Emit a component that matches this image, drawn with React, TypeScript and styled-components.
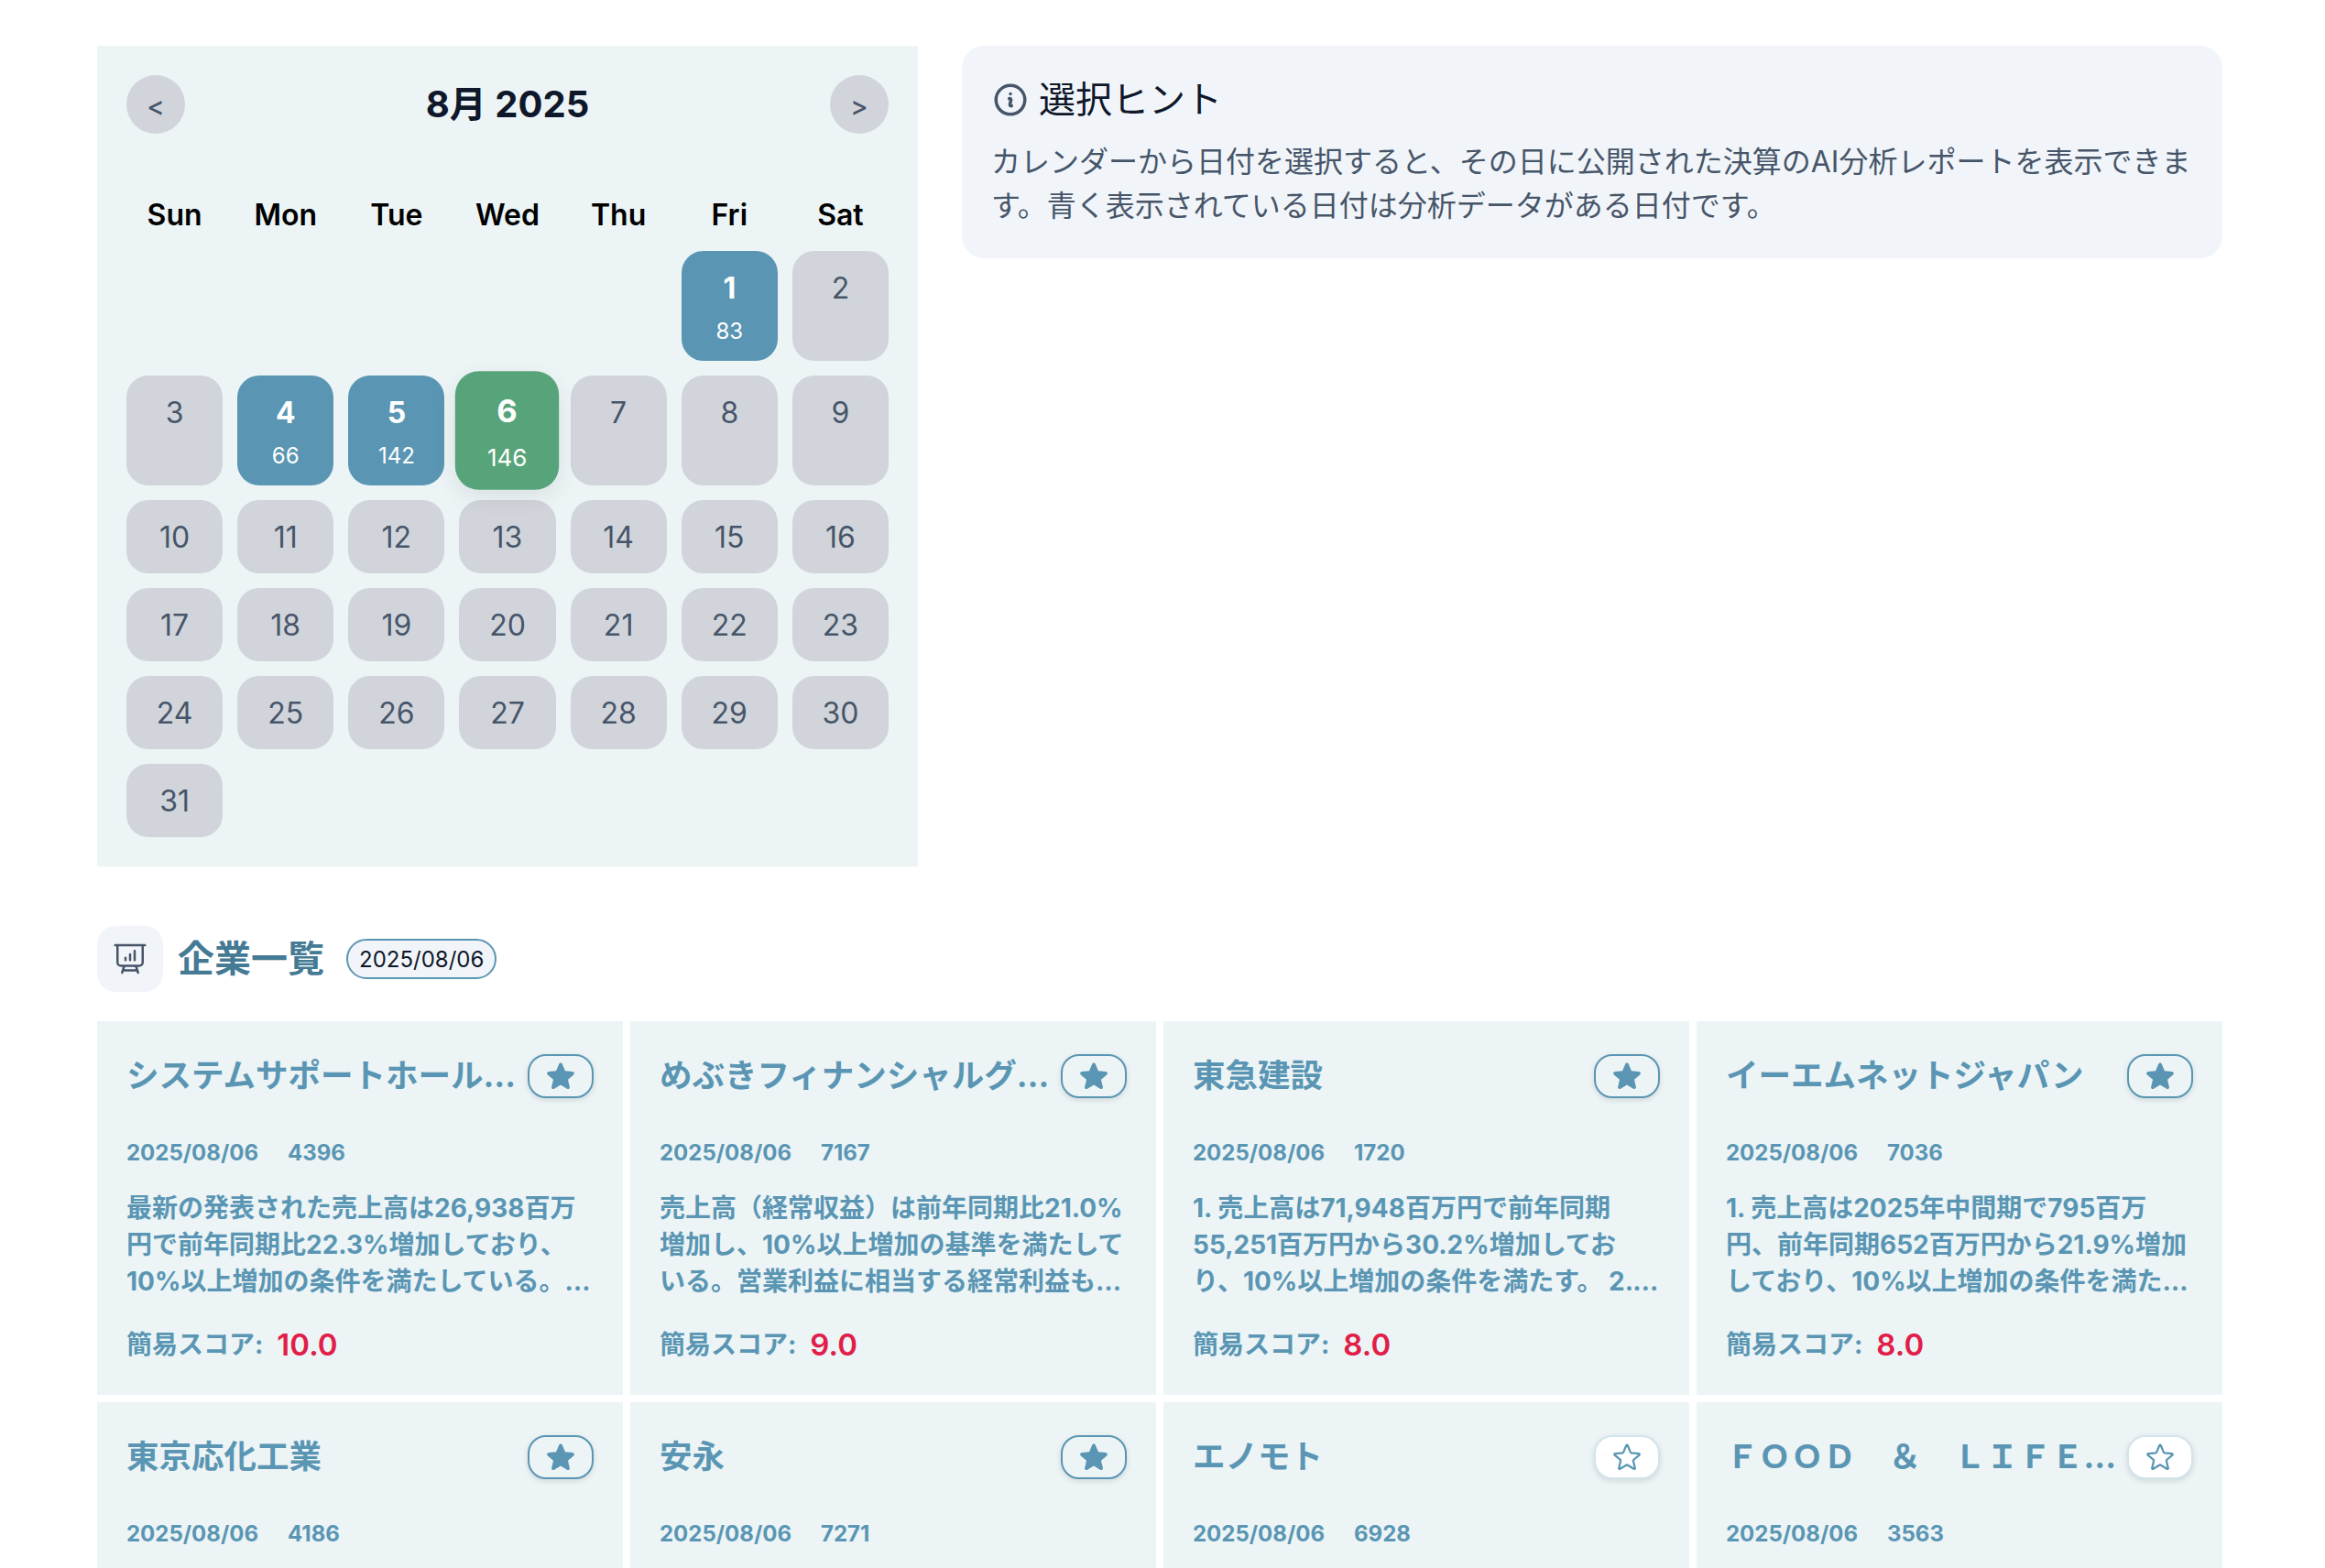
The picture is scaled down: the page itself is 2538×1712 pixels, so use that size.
import React from "react";
import styled, { createGlobalStyle } from "styled-components";
import { HiOutlineInformationCircle, HiOutlinePresentationChartBar, HiStar, HiOutlineStar } from "react-icons/hi2";

const Global = createGlobalStyle`
  html, body { margin: 0; padding: 0; background: #fff; }
  body { font-family: Inter, "Noto Sans CJK JP", sans-serif; height: 1712px; overflow: hidden; }
  * { box-sizing: border-box; }
`;

const BLUE = "#5a96b3";
const PANEL = "#ecf4f6";

const Page = styled.div`
  padding: 50px 112px 0 106px;
  height: 1712px;
  overflow: hidden;
`;
const TopRow = styled.div`
  display: grid;
  grid-template-columns: 896px minmax(0, 1fr);
  gap: 48px;
  align-items: start;
`;
const CalendarPanel = styled.section`
  background: ${PANEL};
  padding: 32px;
`;
const CalHeader = styled.div`
  display: flex;
  align-items: center;
  justify-content: space-between;
  height: 64px;
`;
const NavButton = styled.button`
  width: 64px;
  height: 64px;
  border: 0;
  border-radius: 50%;
  background: #d1d5db;
  color: #475569;
  font: 500 29px Inter, sans-serif;
  padding: 3px 0 0;
`;
const MonthTitle = styled.h2`
  margin: 0 0 6px;
  font-size: 40px;
  font-weight: 700;
  color: #0f172a;
`;
const WeekRow = styled.div`
  display: grid;
  grid-template-columns: repeat(7, minmax(0, 1fr));
  gap: 16px;
  margin-top: 69px;
  margin-bottom: 19px;
`;
const WeekDay = styled.div`
  text-align: center;
  font-size: 32px;
  line-height: 40px;
  font-weight: 600;
  color: #000;
`;
const DayGrid = styled.div`
  display: grid;
  grid-template-columns: repeat(7, minmax(0, 1fr));
  gap: 16px;
`;
const DayCell = styled.div<{ $kind: "none" | "data" | "selected" }>`
  border-radius: 24px;
  padding: 17px 0 15px;
  text-align: center;
  background: ${(p) => (p.$kind === "none" ? "#d1d5db" : p.$kind === "data" ? BLUE : "#58a47a")};
  color: ${(p) => (p.$kind === "none" ? "#475569" : "#fff")};
  ${(p) => p.$kind === "selected" && "transform: scale(1.08); box-shadow: 0 8px 24px rgba(0,0,0,0.08);"}
`;
const DayNumber = styled.div<{ $bold: boolean }>`
  font-size: 32px;
  line-height: 48px;
  font-weight: ${(p) => (p.$bold ? 700 : 400)};
`;
const DayCount = styled.div`
  margin-top: 5px;
  font-size: 24px;
  line-height: 35px;
`;
const HintPanel = styled.aside`
  background: #f1f5f9;
  border-radius: 24px;
  padding: 35px 32px 0;
  height: 232px;
`;
const HintTitle = styled.h3`
  margin: 0 0 20px;
  display: flex;
  align-items: center;
  gap: 10px;
  font-size: 40px;
  line-height: 48px;
  font-weight: 400;
  color: #0f172a;
  svg { color: #475569; stroke-width: 2; }
`;
const HintText = styled.p`
  margin: 0;
  font-size: 32px;
  line-height: 48px;
  color: #475569;
`;
const SectionHeader = styled.div`
  display: flex;
  align-items: center;
  margin-top: 65px;
  margin-bottom: 32px;
`;
const SectionIcon = styled.div`
  width: 72px;
  height: 72px;
  border-radius: 20px;
  background: #f1f5f9;
  display: flex;
  align-items: center;
  justify-content: center;
  color: #475569;
`;
const SectionTitle = styled.h2`
  margin: 0 24px 7px 16px;
  font-size: 40px;
  font-weight: 700;
  color: #457a94;
`;
const DateBadge = styled.span`
  height: 44px;
  padding: 0 12px;
  display: flex;
  align-items: center;
  border: 2px solid ${BLUE};
  border-radius: 22px;
  background: #f1f5f9;
  font-size: 24px;
  color: #0f172a;
`;
const CardGrid = styled.div`
  display: grid;
  grid-template-columns: repeat(4, minmax(0, 1fr));
  gap: 8px;
`;
const Card = styled.article`
  background: ${PANEL};
  padding: 32px;
  height: 408px;
  color: ${BLUE};
`;
const CardHead = styled.div`
  display: flex;
  align-items: center;
  height: 56px;
`;
const CardTitle = styled.h3`
  flex: 1;
  min-width: 0;
  margin: 0;
  font-size: 35.5px;
  font-weight: 700;
  line-height: 56px;
  white-space: nowrap;
  overflow: hidden;
  text-overflow: ellipsis;
`;
const StarButton = styled.button<{ $on: boolean }>`
  flex: none;
  width: 72px;
  height: 48px;
  border-radius: 20px;
  display: flex;
  align-items: center;
  justify-content: center;
  padding: 0;
  color: ${BLUE};
  background: ${(p) => (p.$on ? PANEL : "#fff")};
  border: 2px solid ${(p) => (p.$on ? BLUE : "#d3e4ec")};
  box-shadow: 0 2px 6px rgba(0, 0, 0, 0.12);
`;
const Meta = styled.div`
  display: flex;
  gap: 32px;
  margin-top: 39px;
  font-size: 24px;
  line-height: 34px;
  font-weight: 700;
`;
const Summary = styled.p`
  margin: 23px 0 0;
  height: 120px;
  font-size: 28px;
  line-height: 40px;
  font-weight: 700;
  display: -webkit-box;
  -webkit-box-orient: vertical;
  -webkit-line-clamp: 3;
  overflow: hidden;
`;
const ScoreRow = styled.div`
  display: flex;
  align-items: center;
  gap: 15px;
  margin-top: 25px;
  font-size: 28px;
  line-height: 48px;
  font-weight: 700;
`;
const ScoreValue = styled.span`
  font-size: 33px;
  font-weight: 600;
  color: #e11d48;
`;

const WEEK = ["Sun", "Mon", "Tue", "Wed", "Thu", "Fri", "Sat"];
const COUNTS: Record<number, number> = { 1: 83, 4: 66, 5: 142, 6: 146 };
const days: (number | null)[] = [null, null, null, null, null, ...Array.from({ length: 31 }, (_, i) => i + 1)];

const CARDS = [
  { name: "システムサポートホールディングス", code: "4396", on: true, score: "10.0", text: "最新の発表された売上高は26,938百万円で前年同期比22.3%増加しており、10%以上増加の条件を満たしている。営業利益も増加しており、業績は好調に推移している。" },
  { name: "めぶきフィナンシャルグループ", code: "7167", on: true, score: "9.0", text: "売上高（経常収益）は前年同期比21.0%増加し、10%以上増加の基準を満たしている。営業利益に相当する経常利益も大きく増加しており、業績は好調である。" },
  { name: "東急建設", code: "1720", on: true, score: "8.0", text: "1. 売上高は71,948百万円で前年同期55,251百万円から30.2%増加しており、10%以上増加の条件を満たす。 2. 営業利益も大きく増加しており、収益性は改善している。" },
  { name: "イーエムネットジャパン", code: "7036", on: true, score: "8.0", text: "1. 売上高は2025年中間期で795百万円、前年同期652百万円から21.9%増加しており、10%以上増加の条件を満たしている。営業利益も増加している。" },
  { name: "東京応化工業", code: "4186", on: true },
  { name: "安永", code: "7271", on: true },
  { name: "エノモト", code: "6928", on: false },
  { name: "ＦＯＯＤ　＆　ＬＩＦＥ　ＣＯＭＰＡＮＩＥＳ", code: "3563", on: false },
];

export default function App() {
  return (
    <Page>
      <Global />
      <TopRow>
        <CalendarPanel>
          <CalHeader>
            <NavButton>&lt;</NavButton>
            <MonthTitle>8月 2025</MonthTitle>
            <NavButton>&gt;</NavButton>
          </CalHeader>
          <WeekRow>
            {WEEK.map((d) => (
              <WeekDay key={d}>{d}</WeekDay>
            ))}
          </WeekRow>
          <DayGrid>
            {days.map((d, i) => {
              if (d === null) return <div key={i} />;
              const count = COUNTS[d];
              return (
                <DayCell key={i} $kind={d === 6 ? "selected" : count ? "data" : "none"}>
                  <DayNumber $bold={!!count}>{d}</DayNumber>
                  {count ? <DayCount>{count}</DayCount> : null}
                </DayCell>
              );
            })}
          </DayGrid>
        </CalendarPanel>
        <HintPanel>
          <HintTitle>
            <HiOutlineInformationCircle size={42} />
            選択ヒント
          </HintTitle>
          <HintText>
            カレンダーから日付を選択すると、その日に公開された決算のAI分析レポートを表示できます。青く表示されている日付は分析データがある日付です。
          </HintText>
        </HintPanel>
      </TopRow>
      <SectionHeader>
        <SectionIcon>
          <HiOutlinePresentationChartBar size={40} />
        </SectionIcon>
        <SectionTitle>企業一覧</SectionTitle>
        <DateBadge>2025/08/06</DateBadge>
      </SectionHeader>
      <CardGrid>
        {CARDS.map((c) => (
          <Card key={c.code}>
            <CardHead>
              <CardTitle>{c.name}</CardTitle>
              <StarButton $on={c.on}>{c.on ? <HiStar size={36} /> : <HiOutlineStar size={36} />}</StarButton>
            </CardHead>
            <Meta>
              <span>2025/08/06</span>
              <span>{c.code}</span>
            </Meta>
            {c.text ? <Summary>{c.text}</Summary> : null}
            {c.score ? (
              <ScoreRow>
                簡易スコア:
                <ScoreValue>{c.score}</ScoreValue>
              </ScoreRow>
            ) : null}
          </Card>
        ))}
      </CardGrid>
    </Page>
  );
}
